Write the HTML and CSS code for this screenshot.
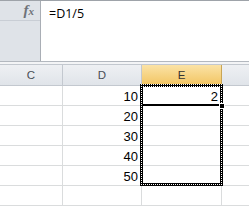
FILE: index.html
```html
<!DOCTYPE html>
<html lang="en">
<head>
  <meta charset="UTF-8" />
  <title>Sheet</title>
  <link rel="stylesheet" href="styles.css">
</head>
<body>
  <div class="formula-bar">
    <div class="name-side">
      <div class="fx-row"><span class="fx">f<span class="fx-x">x</span></span></div>
    </div>
    <div class="formula-input">=D1/5</div>
  </div>
  <div class="bar-gap"></div>

  <div class="sheet">
    <div class="row head-row">
      <div class="cell col-c">C</div>
      <div class="cell col-d">D</div>
      <div class="cell col-e selected">E</div>
      <div class="cell col-f"></div>
    </div>
    <div class="row">
      <div class="cell col-c"></div>
      <div class="cell col-d num">10</div>
      <div class="cell col-e num">2</div>
      <div class="cell col-f"></div>
    </div>
    <div class="row">
      <div class="cell col-c"></div>
      <div class="cell col-d num">20</div>
      <div class="cell col-e num"></div>
      <div class="cell col-f"></div>
    </div>
    <div class="row">
      <div class="cell col-c"></div>
      <div class="cell col-d num">30</div>
      <div class="cell col-e num"></div>
      <div class="cell col-f"></div>
    </div>
    <div class="row">
      <div class="cell col-c"></div>
      <div class="cell col-d num">40</div>
      <div class="cell col-e num"></div>
      <div class="cell col-f"></div>
    </div>
    <div class="row">
      <div class="cell col-c"></div>
      <div class="cell col-d num">50</div>
      <div class="cell col-e num"></div>
      <div class="cell col-f"></div>
    </div>
    <div class="row">
      <div class="cell col-c"></div>
      <div class="cell col-d num"></div>
      <div class="cell col-e num"></div>
      <div class="cell col-f"></div>
    </div>

    <!-- copy marquee around E1:E5 -->
    <svg class="ants" width="83" height="102" viewBox="0 0 83 102" shape-rendering="crispEdges">
      <defs>
        <pattern id="checker" width="2" height="2" patternUnits="userSpaceOnUse">
          <rect width="2" height="2" fill="#000"/>
          <rect x="1" width="1" height="1" fill="#fff"/>
        </pattern>
      </defs>
      <path fill="url(#checker)" fill-rule="evenodd" d="M0 0H83V102H0Z M3 3V99H80V3Z"/>
    </svg>
    <div class="active-edge"></div>
    <div class="fill-handle"></div>
  </div>
</body>
</html>
```

FILE: styles.css
```css
body {
  margin: 0;
  width: 249px;
  height: 208px;
  overflow: hidden;
  background: #fff;
  font-family: "Liberation Sans", Arial, sans-serif;
}
.formula-bar {
  display: flex;
  height: 62px;
  box-sizing: border-box;
  border-top: 1px solid #9ea3a9;
  border-bottom: 1px solid #b3b8bf;
}
.name-side {
  width: 41px;
  box-sizing: border-box;
  background: #dfe3e8;
  border-right: 1px solid #a9aeb5;
}
.fx-row {
  height: 20px;
  box-sizing: border-box;
  border-bottom: 1px solid #c9ced5;
  display: flex;
  justify-content: flex-end;
  align-items: center;
  padding-right: 6px;
}
.fx {
  font-family: "Liberation Serif", "Times New Roman", serif;
  font-style: italic;
  font-weight: bold;
  font-size: 15px;
  color: #6e7278;
  line-height: 1;
}
.fx-x {
  font-size: 11px;
}
.formula-input {
  flex: 1;
  padding: 5px 0 0 8px;
  font-family: "Open Sans", "Noto Sans", sans-serif;
  font-size: 12.5px;
  line-height: 15px;
  color: #000;
}
.bar-gap {
  height: 3px;
  box-sizing: border-box;
  background: #f3f4f6;
  border-bottom: 1px solid #c3c8cf;
}
.sheet {
  position: relative;
}
.row {
  display: flex;
  height: 20px;
  box-sizing: border-box;
  border-bottom: 1px solid #dadcdd;
}
.cell {
  box-sizing: border-box;
  border-right: 1px solid #dadcdd;
  font-size: 13px;
  line-height: 20px;
  color: #000;
}
.col-c { width: 63px; }
.col-d { width: 79px; }
.col-e { width: 80px; }
.col-f { flex: 1; border-right: none; }
.num {
  text-align: right;
  padding-right: 3px;
  line-height: 18px;
  padding-top: 2px;
}
.head-row {
  height: 21px;
  background: linear-gradient(#eef0f3, #e0e4e9);
  border-bottom: 1px solid #c3c8cf;
}
.head-row .cell {
  border-right-color: #c3c8cf;
  text-align: center;
  font-size: 11.5px;
  color: #4a4f56;
}
.head-row .selected {
  background: linear-gradient(#fbe3a6, #f2c562);
  border-right-color: #c9a555;
  color: #333;
}
.ants {
  position: absolute;
  left: 140px;
  top: 19px;
  display: block;
}
.active-edge {
  position: absolute;
  left: 143px;
  top: 39px;
  width: 76px;
  height: 2px;
  background: #000;
}
.fill-handle {
  position: absolute;
  left: 219px;
  top: 38px;
  width: 4px;
  height: 4px;
  background: #000;
  border: 1px solid #fff;
}
```
